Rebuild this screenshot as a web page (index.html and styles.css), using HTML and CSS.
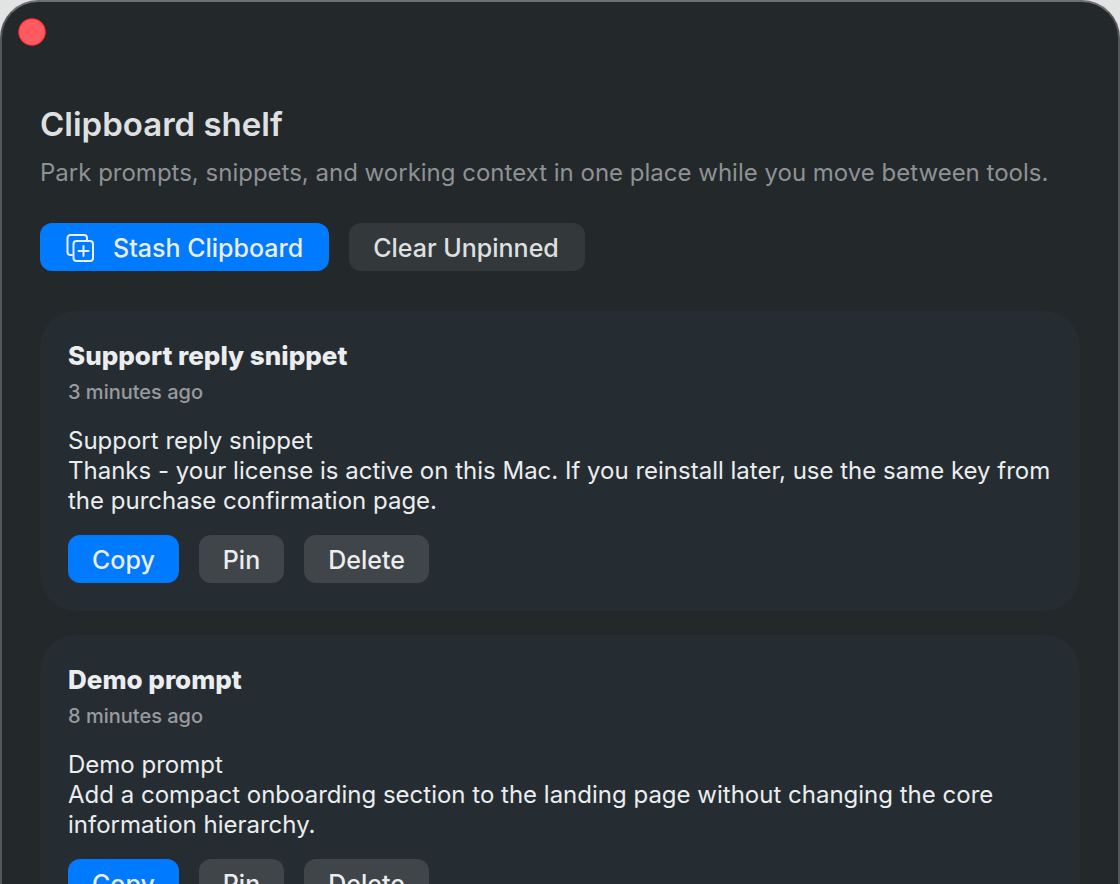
FILE: index.html
```html
<!DOCTYPE html>
<html lang="en">
<head>
<meta charset="utf-8">
<title>Clipboard shelf</title>
<link rel="stylesheet" href="styles.css">
</head>
<body>
<div class="window">
  <header class="titlebar">
    <button class="close" type="button" aria-label="Close window"></button>
  </header>
  <main class="content">
    <h1 class="title">Clipboard shelf</h1>
    <p class="subtitle">Park prompts, snippets, and working context in one place while you move between tools.</p>
    <div class="toolbar">
      <button class="btn btn-primary btn-icon" type="button">
        <svg class="icon" viewBox="0 0 28 28" aria-hidden="true">
          <path d="M6 21H4.500A3 3 0 0 1 1.500 18V4A3 3 0 0 1 4.500 1H18A3 3 0 0 1 21 4V6"/>
          <rect x="7.500" y="7" width="19.500" height="20" rx="3"/>
          <path d="M17.500 12V22M12.500 17H22.500"/>
        </svg>
        Stash Clipboard
      </button>
      <button class="btn btn-quiet" type="button">Clear Unpinned</button>
    </div>
    <article class="card">
      <h2 class="card-title">Support reply snippet</h2>
      <p class="card-time">3 minutes ago</p>
      <p class="card-text">Support reply snippet<br>Thanks - your license is active on this Mac. If you reinstall later, use the same key from the purchase confirmation page.</p>
      <div class="actions">
        <button class="btn btn-primary" type="button">Copy</button>
        <button class="btn btn-gray" type="button">Pin</button>
        <button class="btn btn-gray" type="button">Delete</button>
      </div>
    </article>
    <article class="card">
      <h2 class="card-title">Demo prompt</h2>
      <p class="card-time">8 minutes ago</p>
      <p class="card-text">Demo prompt<br>Add a compact onboarding section to the landing page without changing the core information hierarchy.</p>
      <div class="actions">
        <button class="btn btn-primary" type="button">Copy</button>
        <button class="btn btn-gray" type="button">Pin</button>
        <button class="btn btn-gray" type="button">Delete</button>
      </div>
    </article>
  </main>
</div>
</body>
</html>
```
FILE: styles.css
```css
* {
  box-sizing: border-box;
}

body {
  margin: 0;
  height: 100vh;
  overflow: hidden;
  background: #e3e3e3;
  color: #ebedee;
  font-family: Inter, "Liberation Sans", sans-serif;
}

h1,
h2,
p {
  margin: 0;
}

.window {
  min-height: 100vh;
  border: 2px solid #55595c;
  border-top-color: #6c7073;
  border-bottom: 0;
  border-radius: 38px 38px 0 0;
  background: #23282b;
}

.titlebar {
  display: flex;
  padding: 16px;
}

.close {
  width: 28px;
  height: 28px;
  padding: 0;
  border: 1px solid #e0232f;
  border-radius: 50%;
  background: #ff5a5f;
}

.content {
  padding: 40px 38px;
}

.title {
  color: #dfe0e1;
  font-size: 33px;
  font-weight: 600;
  line-height: 44px;
}

.subtitle {
  margin-top: 12px;
  color: #8f9294;
  font-size: 24px;
  line-height: 30px;
}

.toolbar,
.actions {
  display: flex;
  gap: 20px;
}

.toolbar {
  margin: 35px 0 40px;
}

.btn {
  height: 48px;
  padding: 2px 24px 0;
  border: 0;
  border-radius: 12px;
  color: #ebedee;
  font-family: inherit;
  font-size: 25px;
  font-weight: 500;
  line-height: 32px;
  white-space: nowrap;
}

.toolbar .btn {
  padding-right: 26px;
}

.btn-icon {
  display: flex;
  align-items: center;
  gap: 19px;
  padding-left: 26px;
}

.btn-primary {
  background: #007aff;
}

.btn-quiet {
  background: #33383b;
  color: #dfe0e1;
}

.btn-gray {
  background: #40454a;
}

.icon {
  width: 28px;
  height: 28px;
  fill: none;
  stroke: currentColor;
  stroke-width: 2;
  stroke-linecap: round;
  stroke-linejoin: round;
}

.card {
  margin-bottom: 24px;
  padding: 29px 28px 28px;
  border-radius: 36px;
  background: #262d32;
}

.card-title {
  font-size: 26px;
  font-weight: 800;
  line-height: 32px;
}

.card-time {
  margin-top: 7px;
  color: #989b9e;
  font-size: 20px;
  font-weight: 500;
  line-height: 26px;
}

.card-text {
  margin: 21px 0 19px;
  font-size: 24px;
  line-height: 30px;
}
```
